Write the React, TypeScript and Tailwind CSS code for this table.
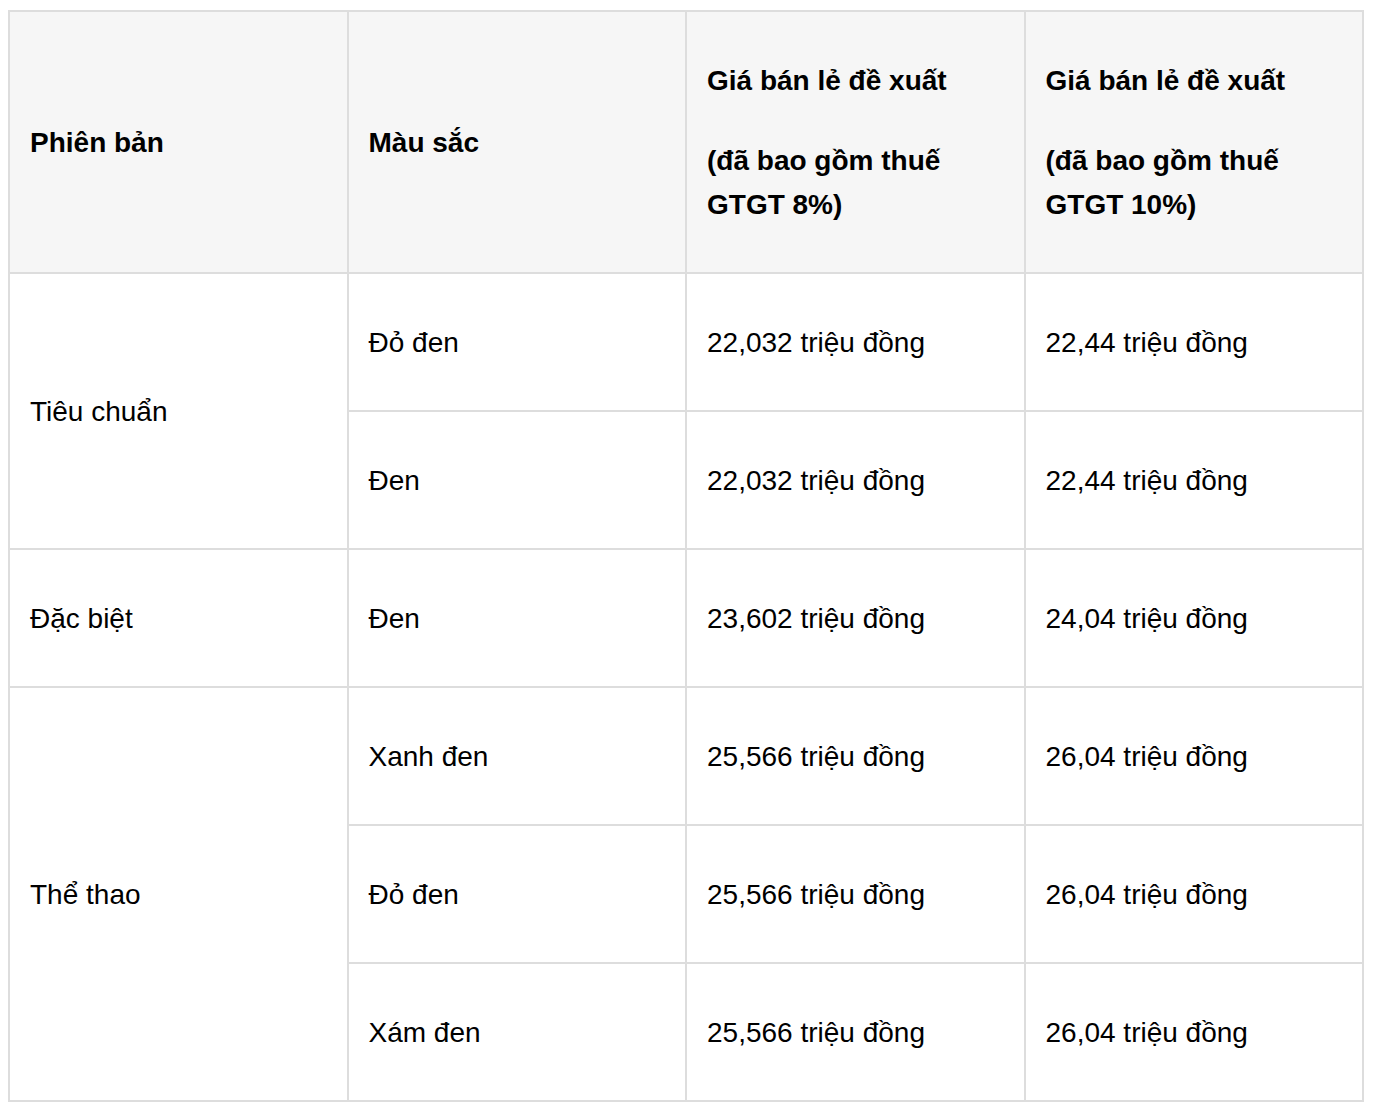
import React from 'react';

type Row = {
  version?: string;
  span?: number;
  color: string;
  price8: string;
  price10: string;
};

const rows: Row[] = [
  { version: 'Tiêu chuẩn', span: 2, color: 'Đỏ đen', price8: '22,032 triệu đồng', price10: '22,44 triệu đồng' },
  { color: 'Đen', price8: '22,032 triệu đồng', price10: '22,44 triệu đồng' },
  { version: 'Đặc biệt', span: 1, color: 'Đen', price8: '23,602 triệu đồng', price10: '24,04 triệu đồng' },
  { version: 'Thể thao', span: 3, color: 'Xanh đen', price8: '25,566 triệu đồng', price10: '26,04 triệu đồng' },
  { color: 'Đỏ đen', price8: '25,566 triệu đồng', price10: '26,04 triệu đồng' },
  { color: 'Xám đen', price8: '25,566 triệu đồng', price10: '26,04 triệu đồng' },
];

const cell = 'flex items-center px-[20px] pt-[2px] border-r-2 border-b-2 border-[#dddddd]';

const spanClass: Record<number, string> = {
  1: 'row-span-1',
  2: 'row-span-2',
  3: 'row-span-3',
};

export default function App() {
  return (
    <div className="min-h-screen bg-white pl-[8px] pt-[10px] text-black" style={{ fontFamily: '"Liberation Sans", Arial, sans-serif' }}>
      <div className="grid w-[1356px] grid-cols-4 grid-rows-[262px_repeat(6,138px)] border-l-2 border-t-2 border-[#dddddd] text-[28px] leading-[44px]">
        {/* Header */}
        <div className={`${cell} bg-[#f6f6f6] font-bold`}>Phiên bản</div>
        <div className={`${cell} bg-[#f6f6f6] font-bold`}>Màu sắc</div>
        <div className={`${cell} bg-[#f6f6f6] font-bold`}>
          <div>
            <p>Giá bán lẻ đề xuất</p>
            <p className="mt-[36px]">(đã bao gồm thuế GTGT 8%)</p>
          </div>
        </div>
        <div className={`${cell} bg-[#f6f6f6] font-bold`}>
          <div>
            <p>Giá bán lẻ đề xuất</p>
            <p className="mt-[36px]">(đã bao gồm thuế GTGT 10%)</p>
          </div>
        </div>

        {/* Body */}
        {rows.map((r, i) => (
          <React.Fragment key={i}>
            {r.version && (
              <div className={`${cell} col-start-1 ${spanClass[r.span ?? 1]}`}>{r.version}</div>
            )}
            <div className={`${cell} col-start-2`}>{r.color}</div>
            <div className={cell}>{r.price8}</div>
            <div className={cell}>{r.price10}</div>
          </React.Fragment>
        ))}
      </div>
    </div>
  );
}
